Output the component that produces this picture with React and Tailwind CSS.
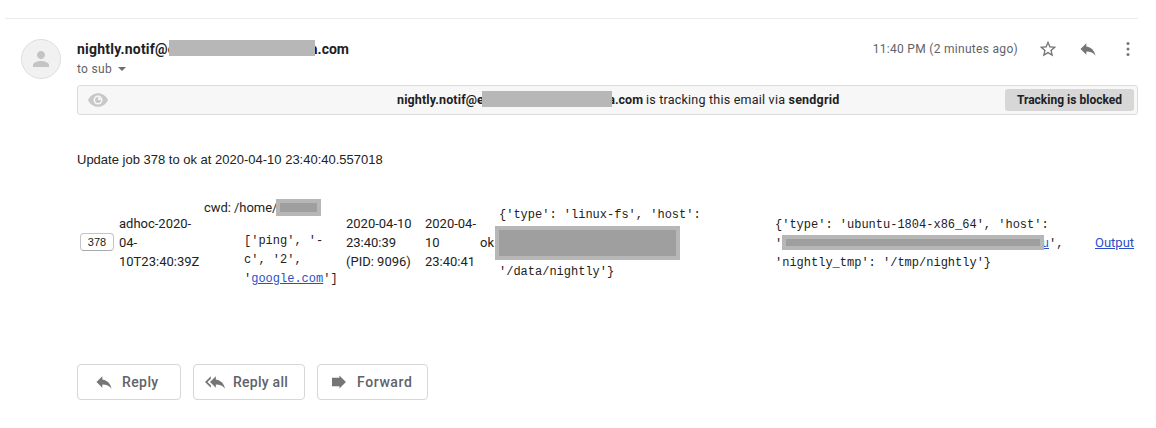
const REPLY = "M10 9V5l-7 7 7 7v-4.1c5 0 8.500 1.600 11 5.100-1-5-4-10-11-11z";

function Icon({ d, className }) {
  return (
    <svg viewBox="0 0 24 24" fill="currentColor" className={className}>
      <path d={d} />
    </svg>
  );
}

function ActionButton({ d, label, className, iconClass, textClass }) {
  return (
    <button className={`flex h-9 items-center rounded border border-[#d4d6d9] text-[#5f6368] ${className}`}>
      <Icon d={d} className={`size-5 shrink-0 text-[#757575] ${iconClass}`} />
      <span className={`text-[14px] font-medium whitespace-nowrap ${textClass}`}>{label}</span>
    </button>
  );
}

function Header() {
  return (
    <header className="flex h-[66px] pt-5 pl-[21px]">
      <div className="flex size-10 shrink-0 items-center justify-center rounded-full border border-[#dedede] bg-[#f1f1f1] text-[#c4c4c4]">
        <Icon
          className="size-6"
          d="M12 12c2.210 0 4-1.790 4-4s-1.790-4-4-4-4 1.790-4 4 1.790 4 4 4zm0 2c-2.670 0-8 1.340-8 4v2h16v-2c0-2.660-5.330-4-8-4z"
        />
      </div>
      <div className="ml-4 flex-1">
        <div className="flex h-5 items-center text-[14px] font-bold text-[#202124]">
          <span className="w-[92px] tracking-[0.22px] whitespace-nowrap">nightly.notif@e</span>
          <span className="z-10 mb-[3px] h-4 w-[146px] bg-[#b7b7b7]" />
          <span className="flex w-[34px] justify-end whitespace-nowrap">a.com</span>
        </div>
        <div className="flex h-5 items-center text-[12px] tracking-[0.3px] text-[#5f6368]">
          to sub
          <span className="ml-[6px] border-x-4 border-t-4 border-x-transparent border-t-[#6b6f73]" />
        </div>
      </div>
      <div className="flex h-5 items-center text-[#757575]">
        <span className="mr-5 text-[12px] tracking-[0.3px] whitespace-nowrap text-[#5f6368]">11:40 PM (2 minutes ago)</span>
        <Icon
          className="size-5"
          d="M22 9.240l-7.190-.620L12 2 9.190 8.630 2 9.240l5.460 4.730L5.820 21 12 17.270 18.180 21l-1.630-7.030L22 9.240zM12 15.400l-3.760 2.270 1-4.280-3.320-2.880 4.380-.380L12 6.100l1.710 4.040 4.380.380-3.320 2.880 1 4.280L12 15.400z"
        />
        <Icon className="ml-5 size-5" d={REPLY} />
        <svg viewBox="0 0 20 20" fill="currentColor" className="mr-[18px] ml-5 size-5">
          <circle cx="10" cy="4.500" r="1.500" />
          <circle cx="10" cy="10" r="1.500" />
          <circle cx="10" cy="15.500" r="1.500" />
        </svg>
      </div>
    </header>
  );
}

function TrackingBar() {
  return (
    <section className="mr-[18px] ml-[77px] flex h-[30px] items-center rounded-[3px] border border-[#dcdcdc] bg-[#f7f7f7] pr-[3px] pl-[10px] text-[12.500px] text-[#202124]">
      <svg viewBox="0 0 20 14" className="h-[14px] w-5 shrink-0">
        <path d="M0 7C4-2.100 16-2.100 20 7 16 16.100 4 16.100 0 7z" fill="#c8c8c8" />
        <circle cx="10" cy="7" r="4.500" fill="#f7f7f7" />
        <circle cx="10" cy="7" r="2.900" fill="#c8c8c8" />
        <path d="M10 7V4.200A2.800 2.800 0 0 1 12.800 7z" fill="#f7f7f7" />
      </svg>
      <div className="ml-[289px] flex flex-1 items-center whitespace-nowrap">
        <b className="w-[85px] tracking-[0.13px]">nightly.notif@e</b>
        <span className="z-10 mb-[2px] h-4 w-[130px] bg-[#b7b7b7]" />
        <b className="flex w-[31px] justify-end">a.com</b>
        <span className="ml-[3px] text-[12.500px] tracking-[0.22px]">is tracking this email via <b>sendgrid</b></span>
      </div>
      <span className="flex h-[22px] w-[129px] items-center justify-center rounded-[3px] bg-[#d7d7d7] text-[12px] font-bold tracking-[0.02px] whitespace-nowrap">
        Tracking is blocked
      </span>
    </section>
  );
}

function Job() {
  return (
    <section className="mt-7 grid grid-cols-[39px_85px_142px_79px_55px_19px_277px_319px_auto] items-center pl-20 text-[13px] leading-[19px] whitespace-nowrap text-[#222]">
      <span className="flex h-[18px] w-[34px] items-center justify-center rounded border border-[#c4c4c4] border-b-[#aaa] font-['Liberation_Sans',sans-serif] text-[11px]">378</span>
      <div>adhoc-2020-<br />04-<br />10T23:40:39Z</div>
      <div>
        <div className="mt-px flex h-[19px] items-center">
          <span className="w-[72px] tracking-[-0.05px]">cwd: /home/</span>
          <span className="h-[17px] w-[45px] shrink-0 border-4 border-[#b7b7b7] bg-[#9f9f9f]" />
        </div>
        <div className="mt-[15px] -mb-0.5 ml-10 font-['Liberation_Mono',monospace] text-[12px]">
          ['ping', '-<br />c', '2',<br />'<a className="text-[#2a50c8] underline">google.com</a>']
        </div>
      </div>
      <div>2020-04-10<br />23:40:39<br />(PID: 9096)</div>
      <div>2020-04-<br />10<br />23:40:41</div>
      <div>ok</div>
      <div className="pt-[3px] font-['Liberation_Mono',monospace] text-[12px]">
        {"{'type': 'linux-fs', 'host':"}
        <div className="-ml-1 flex h-[38px] items-start pt-px">
          <span className="h-[34px] w-[185px] border-4 border-[#b7b7b7] bg-[#9f9f9f]" />
        </div>
        {"'/data/nightly'}"}
      </div>
      <div className="-ml-px pt-[5px] font-['Liberation_Mono',monospace] text-[12px]">
        {"{'type': 'ubuntu-1804-x86_64', 'host':"}
        <div className="flex h-[19px] items-center">
          <span className="w-[7px]">'</span>
          <span className="z-10 mb-[4px] h-[15px] w-[262px] border-4 border-[#b7b7b7] bg-[#9f9f9f]" />
          <span className="flex w-[5px] justify-end text-[#2a50c8] underline">u</span>
          <span>',</span>
        </div>
        {"'nightly_tmp': '/tmp/nightly'}"}
      </div>
      <a className="text-[#2a50c8] underline">Output</a>
    </section>
  );
}

export default function App() {
  return (
    <main className="h-[428px] w-[1156px] overflow-hidden bg-white pt-[18px] font-['Roboto',sans-serif]">
      <div className="mr-[18px] ml-[5px] h-px bg-[#ebebeb]" />
      <Header />
      <TrackingBar />
      <p className="mt-[35px] ml-[77px] h-[19px] font-['Liberation_Sans',sans-serif] text-[13px] leading-[20px] text-[#222]">
        Update job 378 to ok at 2020-04-10 23:40:40.557018
      </p>
      <Job />
      <div className="mt-[77px] ml-[77px] flex gap-3">
        <ActionButton d={REPLY} label="Reply" className="w-[104px]" iconClass="ml-4" textClass="ml-2 tracking-[0.4px]" />
        <ActionButton
          d="M7 8V5l-7 7 7 7v-3l-4-4 4-4zm6 1V5l-7 7 7 7v-4.100c5 0 8.500 1.600 11 5.100-1-5-4-10-11-11z"
          label="Reply all"
          className="w-[112px]"
          iconClass="ml-[11px]"
          textClass="ml-2 tracking-[0.25px]"
        />
        <ActionButton d="M12.500 6.800V4.200l7.800 7.800-7.800 7.800v-2.600H3.600V6.800z" label="Forward" className="w-[111px]" iconClass="ml-[11px]" textClass="ml-2 tracking-[0.6px]" />
      </div>
    </main>
  );
}
